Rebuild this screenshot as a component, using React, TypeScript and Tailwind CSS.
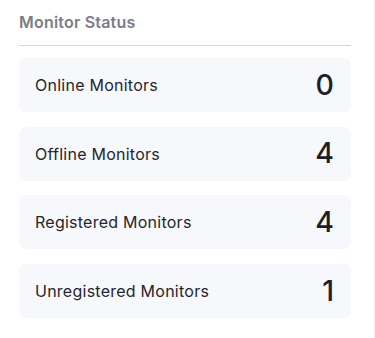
import React from 'react';

const stats = [
  { label: 'Online Monitors', value: 0 },
  { label: 'Offline Monitors', value: 4 },
  { label: 'Registered Monitors', value: 4 },
  { label: 'Unregistered Monitors', value: 1 },
];

export default function App() {
  return (
    <div
      className="w-[375px] h-[338px] bg-white border-r border-[#ededf0]"
      style={{ fontFamily: 'Inter, "Noto Sans", sans-serif' }}
    >
      <div className="w-[332px] ml-[19px] pt-[11px]">
        <h2 className="text-[16px] leading-[22px] font-semibold tracking-[0.2px] text-[#7b7d86] pb-[12px] border-b border-[#d3d5da]">
          Monitor Status
        </h2>
        <div className="flex flex-col gap-[14.7px] mt-[12px]">
          {stats.map((s) => (
            <div
              key={s.label}
              className="h-[54px] rounded-[7px] bg-[#f7f8fb] flex items-center justify-between pl-[16px] pr-[17px]"
            >
              <span className="text-[16px] tracking-[0.25px] text-[#25262b]">{s.label}</span>
              <span className="text-[28.5px] font-medium text-[#1f2026]">{s.value}</span>
            </div>
          ))}
        </div>
      </div>
    </div>
  );
}
